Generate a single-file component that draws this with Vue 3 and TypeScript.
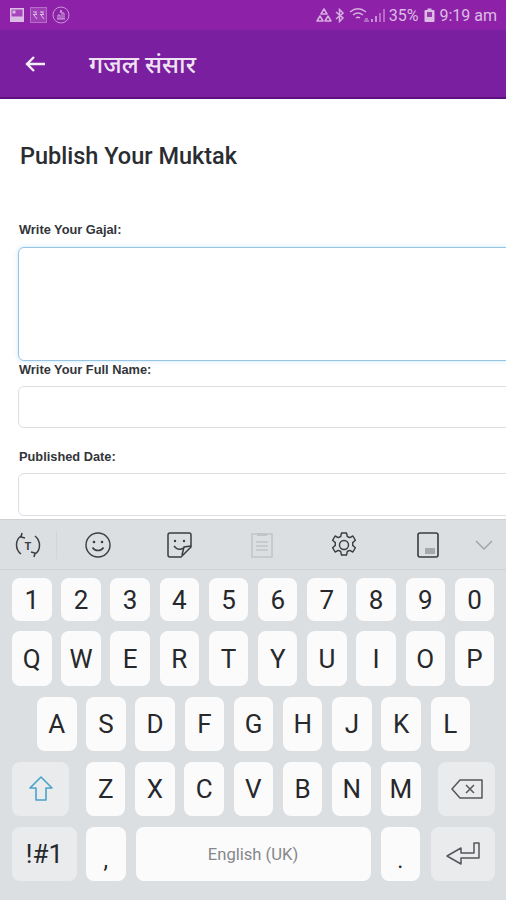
<script setup lang="ts">
const row1 = ['1','2','3','4','5','6','7','8','9','0'];
const row2 = ['Q','W','E','R','T','Y','U','I','O','P'];
const row3 = ['A','S','D','F','G','H','J','K','L'];
const row4 = ['Z','X','C','V','B','N','M'];
</script>

<template>
  <div class="phone">
    <div class="status">
      <div class="status-left">
        <svg width="16" height="16" viewBox="0 0 16 16"><rect x="1" y="1" width="14" height="14" fill="#dcbce4"/><rect x="2.500" y="2.500" width="11" height="7" fill="#a546ba"/><rect x="3.500" y="3.500" width="3" height="3" fill="#dcbce4"/></svg>
        <svg width="17" height="16" viewBox="0 0 17 16"><rect x="0.500" y="0.500" width="16" height="15" fill="#a03fb5" stroke="#b76cc8"/><path d="M3 5h4M3 7.500h4M5 5c2 1 1 3-1 3l3 4M10 5h4M10 7.500h4M11 5c3 1 2 3 0 3l3 4" fill="none" stroke="#dcbce4" stroke-width="1"/></svg>
        <svg width="18" height="18" viewBox="0 0 18 18"><circle cx="9" cy="9" r="8" fill="none" stroke="#c994d4" stroke-width="1"/><path d="M5 13h8M6 13V9h2v4M10 13V7h2v6M8 7l1-3 1 3" fill="none" stroke="#d0a2da" stroke-width="1"/></svg>
      </div>
      <div class="status-right">
        <svg width="16" height="15" viewBox="0 0 16 15"><path d="M8 1L5 6h6zM4 8l-3 5h6zM12 8l-3 5h6z" fill="none" stroke="#d7aee0" stroke-width="1.500" stroke-linejoin="round"/></svg>
        <svg width="9" height="15" viewBox="0 0 9 15"><path d="M1 4l7 6-3.500 3.500V1.500L8 5l-7 6" fill="none" stroke="#d7aee0" stroke-width="1.500"/></svg>
        <svg class="wifi" width="22" height="15" viewBox="0 0 22 15"><path d="M1 4c5-4 11-4 16 0M4 7c3-2.500 7-2.500 10 0M7 10c1.500-1 2.500-1 4 0" fill="none" stroke="#d7aee0" stroke-width="1.500"/><path d="M16 11l3 0M15 13h5" stroke="#d7aee0" stroke-width="1.200"/></svg>
        <svg class="signal" width="15" height="15" viewBox="0 0 15 15"><rect x="0" y="11" width="2" height="3" fill="#c88fd4"/><rect x="4" y="8" width="2" height="6" fill="#c88fd4"/><rect x="8" y="5" width="2" height="9" fill="#b768c8"/><rect x="12" y="1" width="2" height="13" fill="#b768c8"/></svg>
        <span class="pct">35%</span>
        <svg class="batt" width="11" height="15" viewBox="0 0 11 15"><rect x="0.500" y="2" width="10" height="12" rx="1" fill="#dcbce4"/><rect x="3.500" y="0.500" width="4" height="2" fill="#dcbce4"/><rect x="3" y="4" width="5" height="5" fill="#9a3cb0"/></svg>
        <span class="clock">9:19 am</span>
      </div>
    </div>
    <header class="appbar">
      <svg class="back" width="24" height="24" viewBox="0 0 24 24"><path d="M22 12H4M11 5l-7 7 7 7" fill="none" stroke="#f4ecf6" stroke-width="2.400"/></svg>
      <span class="apptitle">गजल संसार</span>
    </header>

    <main class="content">
      <h1 class="title">Publish Your Muktak</h1>
      <label class="lbl first">Write Your Gajal:</label>
      <div class="area"></div>
      <label class="lbl second">Write Your Full Name:</label>
      <div class="field"></div>
      <label class="lbl third">Published Date:</label>
      <div class="field last"></div>
    </main>

    <section class="kbd">
      <div class="tools">
        <svg class="t-trans" width="30" height="30" viewBox="0 0 30 30"><path d="M8 24C2 19 2 10 8 6M9 3l-1 4 4 1M22 6c6 5 6 14 0 18M21 27l1-4-4-1" fill="none" stroke="#3b3d40" stroke-width="1.500"/><text x="15" y="19.500" class="t-t">T</text></svg>
        <span class="tool-sep"></span>
        <svg class="t-emoji" width="28" height="28" viewBox="0 0 28 28"><circle cx="14" cy="14" r="12" fill="none" stroke="#3b3d40" stroke-width="1.400"/><circle cx="10" cy="11" r="1.300" fill="#3b3d40"/><circle cx="18" cy="11" r="1.300" fill="#3b3d40"/><path d="M8.500 16.500c2.500 4 8.500 4 11 0" fill="none" stroke="#3b3d40" stroke-width="1.500"/></svg>
        <svg class="t-sticker" width="28" height="28" viewBox="0 0 28 28"><path d="M4 2h19a2 2 0 0 1 2 2v12l-10 10H4a2 2 0 0 1-2-2V4a2 2 0 0 1 2-2z" fill="none" stroke="#3b3d40" stroke-width="1.500"/><circle cx="9" cy="10" r="1.200" fill="#3b3d40"/><circle cx="18" cy="10" r="1.200" fill="#3b3d40"/><path d="M8 15c3 4 7 4 9 2M25 15l-7 1-2 8" fill="none" stroke="#3b3d40" stroke-width="1.500"/></svg>
        <svg class="t-clip" width="22" height="26" viewBox="0 0 22 26"><rect x="1" y="2" width="20" height="23" fill="none" stroke="#c2c4c7" stroke-width="1.500"/><rect x="6" y="1" width="10" height="3" fill="#c2c4c7"/><path d="M5 10h12M5 14h12M5 18h12" stroke="#c2c4c7" stroke-width="1.500"/></svg>
        <svg class="t-gear" width="28" height="28" viewBox="0 0 28 28"><path d="M11.500 2h5l.8 3.500 2.400 1.100 3.200-1.600 2.500 4.300-2.700 2.300v2.800l2.700 2.300-2.500 4.300-3.200-1.600-2.400 1.100-.8 3.500h-5l-.8-3.500-2.400-1.100-3.200 1.600-2.500-4.300 2.700-2.300v-2.800L2.600 9.300l2.500-4.300 3.200 1.600 2.400-1.100z" fill="none" stroke="#3b3d40" stroke-width="1.400" stroke-linejoin="round"/><circle cx="14" cy="14" r="4.500" fill="none" stroke="#3b3d40" stroke-width="1.400"/></svg>
        <svg class="t-size" width="22" height="26" viewBox="0 0 22 26"><rect x="1" y="1" width="20" height="24" rx="2" fill="none" stroke="#3b3d40" stroke-width="1.600"/><rect x="8" y="16" width="10" height="6" fill="#a6a8ab"/></svg>
        <svg class="t-chev" width="20" height="12" viewBox="0 0 20 12"><path d="M2 2l8 8 8-8" fill="none" stroke="#a2a5a8" stroke-width="1.500"/></svg>
      </div>
      <div class="row r1"><span v-for="k in row1" :key="k" class="key">{{ k }}</span></div>
      <div class="row r2"><span v-for="k in row2" :key="k" class="key">{{ k }}</span></div>
      <div class="row r3"><span v-for="k in row3" :key="k" class="key">{{ k }}</span></div>
      <div class="row r4">
        <span class="key fn shift">
          <svg width="26" height="28" viewBox="0 0 26 28"><path d="M13 2L2 13h6v12h10V13h6z" fill="none" stroke="#4aa3c9" stroke-width="1.600" stroke-linejoin="round"/></svg>
        </span>
        <span v-for="k in row4" :key="k" class="key">{{ k }}</span>
        <span class="key fn del">
          <svg width="32" height="20" viewBox="0 0 32 20"><path d="M9 1h22v18H9L1 10z" fill="none" stroke="#55575a" stroke-width="1.500" stroke-linejoin="round"/><path d="M15 6l8 8M23 6l-8 8" stroke="#55575a" stroke-width="1.500"/></svg>
        </span>
      </div>
      <div class="row r5">
        <span class="key fn sym">!#1</span>
        <span class="key punct">,</span>
        <span class="key space">English (UK)</span>
        <span class="key punct">.</span>
        <span class="key fn enter">
          <svg width="34" height="24" viewBox="0 0 34 24"><path d="M33 1v15H15v6L1 14 15 6v5h13V1z" fill="none" stroke="#55575a" stroke-width="1.500" stroke-linejoin="round"/></svg>
        </span>
      </div>
    </section>
  </div>
</template>

<style>
html, body { margin: 0; background: #fff; }
</style>

<style scoped>
.phone { width: 506px; height: 900px; overflow: hidden; display: flex; flex-direction: column; font-family: Roboto, "Liberation Sans", sans-serif; background: #fff; }
.status { height: 30px; flex: none; background: #8d22a8; display: flex; align-items: center; justify-content: space-between; padding: 0 9px; box-sizing: border-box; color: #dcbce4; }
.status-left, .status-right { display: flex; align-items: center; }
.status-left { gap: 5px; }
.status-right { gap: 3px; }
.wifi { margin-left: 2px; }
.signal { margin-left: -3px; }
.pct { font-size: 16px; margin-left: 0; }
.batt { margin-left: 3px; margin-right: 1px; }
.clock { font-size: 16px; }
.appbar { height: 69px; flex: none; background: #7a1fa0; border-bottom: 2px solid #5e1080; box-sizing: border-box; display: flex; align-items: center; padding-left: 23px; color: #fff; }
.back { flex: none; }
.apptitle { margin-left: 42px; font-family: "Noto Sans", "DejaVu Sans", sans-serif; font-size: 24.500px; font-weight: 500; color: #efe2f3; }
.content { height: 420px; flex: none; box-sizing: border-box; padding: 0 0 0 18px; overflow: hidden; }
.title { margin: 43px 0 0 2px; font-size: 23.500px; line-height: 28px; font-weight: 500; color: #2a2d31; }
.lbl { display: block; margin-left: 1px; font-family: "Liberation Sans", Arial, sans-serif; font-size: 12.800px; line-height: 14px; font-weight: 700; color: #33353a; }
.first { margin-top: 53px; }
.second { margin-top: 2px; }
.third { margin-top: 22px; }
.area { width: 520px; height: 114px; margin-top: 10px; box-sizing: border-box; background: #fff; border: 1.500px solid #94c6e2; border-radius: 6px; box-shadow: 0 0 5px rgba(128, 189, 255, 0.4); }
.field { width: 520px; height: 42px; margin-top: 9px; box-sizing: border-box; background: #fff; border: 1.500px solid #dcdfe1; border-radius: 6px; }
.last { height: 43px; }
.kbd { flex: 1; background: #dcdfe2; display: flex; flex-direction: column; }
.tools { height: 51px; flex: none; position: relative; box-sizing: border-box; border-top: 1px solid #cfd1d4; border-bottom: 1px solid #cfd1d4; display: flex; align-items: center; padding-left: 13px; }
.tools svg { flex: none; }
.tool-sep { width: 1px; height: 28px; background: #d3d5d8; margin-left: 13px; }
.t-emoji { margin-left: 27px; }
.t-sticker { margin-left: 54px; }
.t-clip { margin-left: 57px; }
.t-gear { margin-left: 57px; }
.t-size { margin-left: 59px; }
.t-chev { margin-left: 35px; }
.t-t { font: 700 11px Roboto, sans-serif; fill: #3b3d40; text-anchor: middle; }
.row { display: flex; flex: none; }
.key { flex: none; width: 39.500px; height: 100%; border-radius: 8px; background: #fbfbfb; color: #26282b; display: flex; align-items: center; justify-content: center; font-size: 26px; box-sizing: border-box; }
.fn { background: #e9ebed; }
.r1 { height: 43px; margin-top: 8px; padding-left: 12px; gap: 9.700px; }
.r2 { height: 55px; margin-top: 10px; padding-left: 12px; gap: 9.700px; }
.r3 { height: 54px; margin-top: 11px; padding-left: 37px; gap: 9.700px; }
.r4 { height: 54px; margin-top: 11px; padding-left: 12px; gap: 9.700px; }
.r5 { height: 54px; margin-top: 11px; padding-left: 12px; }
.shift { width: 57px; margin-right: 7.300px; }
.del { width: 57px; margin-left: 8px; }
.sym { width: 65px; margin-right: 9px; }
.punct { align-items: flex-end; padding-bottom: 7px; font-size: 23px; }
.space { width: 235px; margin-left: 10px; margin-right: 10px; font-size: 16.600px; color: #85878a; }
.enter { width: 64px; margin-left: 11px; }
</style>
